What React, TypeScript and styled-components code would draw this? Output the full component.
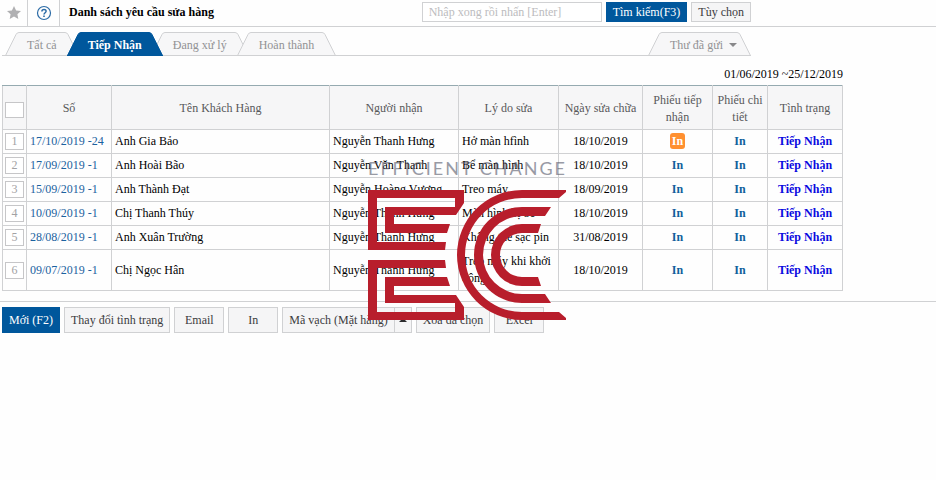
import React from "react";
import styled, { createGlobalStyle, css } from "styled-components";

const line = "#d0d1d3";
const blue = "#00579c";

const GlobalStyle = createGlobalStyle`
  * { box-sizing: border-box; }
  body { margin: 0; background: #fefefe; color: #000; }
  body, button, input, table { font: 12px/17px "Liberation Serif", serif; }
  button { cursor: pointer; }
  a { text-decoration: none; }
`;

const TopBar = styled.header`
  border-bottom: 1px solid ${line};
`;
const TopBarInner = styled.div`
  display: flex;
  align-items: stretch;
  height: 26px;
  max-width: 751px;
`;
const IconButton = styled.button<{ $width: number }>`
  flex: none;
  width: ${(p) => p.$width}px;
  display: flex;
  align-items: center;
  justify-content: center;
  padding: 0;
  border: 0;
  border-right: 1px solid ${line};
  background: none;
`;
const Title = styled.h1`
  flex: 1;
  margin: 0;
  padding: 4px 0 0 9px;
  font-size: 12px;
  line-height: 17px;
  white-space: nowrap;
`;
const SearchForm = styled.form`
  display: flex;
  align-items: center;
  gap: 4px;
  padding-bottom: 2px;
`;
const SearchInput = styled.input`
  width: 180px;
  height: 20px;
  padding: 0 6px;
  border: 1px solid ${line};
  background: #fff;
  &::placeholder { color: #bcbcbe; opacity: 1; }
`;
const Button = styled.button<{ $primary?: boolean; $small?: boolean }>`
  height: ${(p) => (p.$small ? 20 : 26)}px;
  min-width: 50px;
  padding: 0 6px;
  border: 1px solid ${line};
  background: #f5f5f6;
  color: #3c3c3e;
  white-space: nowrap;
  ${(p) =>
    p.$primary &&
    css`
      border-color: ${blue};
      background: ${blue};
      color: #fff;
    `}
`;

const TabArea = styled.nav`
  max-width: 749px;
  margin: 5px 0 0 2px;
  border-bottom: 1px solid ${line};
`;
const TabList = styled.div`
  display: flex;
  padding-left: 3px;
`;
const Tab = styled.button<{ $active?: boolean; $end?: boolean }>`
  display: flex;
  height: 24px;
  margin: 0 -12px -1px 0;
  padding: 0;
  border: 0;
  background: none;
  color: ${(p) => (p.$active ? "#fff" : "#929294")};
  font-weight: ${(p) => (p.$active ? "bold" : "normal")};
  white-space: nowrap;
  ${(p) => p.$active && "z-index: 1;"}
  ${(p) => p.$end && "margin-left: auto; margin-right: 0;"}
`;
const TabLabel = styled.span<{ $active?: boolean; $menu?: boolean }>`
  display: flex;
  align-items: center;
  gap: 6px;
  height: 24px;
  padding: 2px ${(p) => (p.$menu ? 0 : p.$active ? 7 : 8)}px 0
    ${(p) => (p.$active ? 7 : 8)}px;
  border-top: 1px solid ${(p) => (p.$active ? blue : line)};
  border-bottom: 1px solid ${(p) => (p.$active ? blue : line)};
  background: ${(p) => (p.$active ? blue : "#f7f7f8")};
`;
const TabEdge = ({ active, flip }: { active?: boolean; flip?: boolean }) => (
  <svg width="14" height="24" viewBox="0 0 14 24" aria-hidden="true">
    <g transform={flip ? "translate(14 0) scale(-1 1)" : undefined}>
      <path d="M0 24L11 2.5Q12 .5 14 .5V24Z" fill={active ? blue : "#f7f7f8"} />
      <path d="M0 23.5H14" stroke={active ? blue : line} />
      <path d="M.3 24L11 2.5Q12 .5 14 .5" fill="none" stroke={active ? blue : line} />
    </g>
  </svg>
);

const Content = styled.main`
  max-width: 843px;
  padding: 10px 0 10px 2px;
`;
const Period = styled.div`
  margin-bottom: 2px;
  text-align: right;
`;
const Table = styled.table`
  width: 100%;
  table-layout: fixed;
  border-collapse: collapse;
`;
const Col = styled.col<{ $width?: number }>`
  ${(p) => p.$width && `width: ${p.$width}px;`}
`;
const HeadCell = styled.th`
  height: 44px;
  padding: 3px 3px 1px;
  border: 1px solid ${line};
  border-top-color: #95aab0;
  background: #f6f6f7;
  color: #58585a;
  font-weight: normal;
`;
const Cell = styled.td<{ $center?: boolean }>`
  padding: 3px;
  border: 1px solid ${line};
  text-align: ${(p) => (p.$center ? "center" : "left")};
`;
const CheckAll = styled.input`
  appearance: none;
  display: block;
  width: 19px;
  height: 16px;
  margin: 2px 0 0 -1px;
  border: 1px solid #c6c6c8;
  background: #fff;
`;
const SelectCell = styled(Cell)`
  padding: 0 2px;
`;
const RowNumber = styled.button`
  display: block;
  width: 19px;
  height: 17px;
  padding: 0;
  border: 1px solid #c6c6c8;
  background: #fff;
  color: #a2a2a4;
  line-height: 15px;
`;
const NumberLink = styled.a`
  color: #1b629f;
`;
const PrintLink = styled.a<{ $highlight?: boolean }>`
  color: #10609c;
  font-weight: bold;
  ${(p) =>
    p.$highlight &&
    css`
      display: inline-block;
      height: 16px;
      padding: 0 2px;
      border-radius: 3px;
      background: #ff9030;
      color: #fff;
      line-height: 16px;
      vertical-align: top;
    `}
`;
const StatusLink = styled.a`
  color: #0a0ae0;
  font-weight: bold;
`;

const Footer = styled.footer`
  display: flex;
  flex-wrap: wrap;
  gap: 4px;
  padding: 5px 2px;
  border-top: 1px solid ${line};
`;
const SplitButton = styled.div`
  display: flex;
`;
const ArrowButton = styled(Button)`
  min-width: 0;
  width: 18px;
  margin-left: -1px;
  padding: 0;
`;
const ArrowIcon = styled.svg`
  display: block;
  margin: 0 auto;
`;

const Page = styled.div`
  position: relative;
`;
const Watermark = styled.div`
  position: absolute;
  top: 157px;
  left: 368px;
  width: 202px;
  pointer-events: none;
`;
const WatermarkText = styled.div`
  height: 33px;
  color: #55586a;
  font: 18px/22px Lato, sans-serif;
  letter-spacing: 2px;
  white-space: nowrap;
  opacity: 0.6;
`;
const WatermarkLogo = styled.svg`
  display: block;
`;

const upperE =
  "M0 0H96V13L88 25H26V34H82L79 43H17V17H87V8H9V52H78L77 60H0Z";

const columns: { name: string; width?: number }[] = [
  { name: "Số", width: 85 },
  { name: "Tên Khách Hàng" },
  { name: "Người nhận", width: 129 },
  { name: "Lý do sửa", width: 100 },
  { name: "Ngày sửa chữa", width: 84 },
  { name: "Phiếu tiếp nhận", width: 70 },
  { name: "Phiếu chi tiết", width: 55 },
  { name: "Tình trạng", width: 75 },
];

const rows = [
  ["17/10/2019 -24", "Anh Gia Bảo", "Nguyễn Thanh Hưng", "Hở màn hfình", "18/10/2019"],
  ["17/09/2019 -1", "Anh Hoài Bão", "Nguyễn Văn Thanh", "Bể màn hình", "18/10/2019"],
  ["15/09/2019 -1", "Anh Thành Đạt", "Nguyễn Hoàng Vương", "Treo máy", "18/09/2019"],
  ["10/09/2019 -1", "Chị Thanh Thúy", "Nguyễn Thanh Hưng", "Màn hình bị bể", "18/10/2019"],
  ["28/08/2019 -1", "Anh Xuân Trường", "Nguyễn Thanh Hưng", "Không thể sạc pin", "31/08/2019"],
  ["09/07/2019 -1", "Chị Ngọc Hân", "Nguyễn Thanh Hưng", "Treo máy khi khởi động", "18/10/2019"],
];

const tabs = ["Tất cả", "Tiếp Nhận", "Đang xử lý", "Hoàn thành"];

export default function App() {
  return (
    <Page>
      <GlobalStyle />
      <TopBar>
        <TopBarInner>
          <IconButton $width={28} aria-label="Yêu thích">
            <svg width="14" height="14" viewBox="0 0 14 14">
              <path d="M7 0L9.1 4.4L14 5L10.4 8.2L11.3 13L7 10.6L2.7 13L3.6 8.2L0 5L4.9 4.4Z" fill="#b0b0b2" />
            </svg>
          </IconButton>
          <IconButton $width={32} aria-label="Trợ giúp">
            <svg width="16" height="16" viewBox="0 0 16 16" fill="none" stroke="#2b6ba6">
              <circle cx="8" cy="8" r="6.5" strokeWidth="1.2" />
              <path d="M5.9 6.4C5.9 3.7 10.2 3.8 10.1 6.3C10 7.8 8 7.8 8 9.6" strokeWidth="1.5" />
              <path d="M8 10.6V12.1" strokeWidth="1.6" />
            </svg>
          </IconButton>
          <Title>Danh sách yêu cầu sửa hàng</Title>
          <SearchForm onSubmit={(e) => e.preventDefault()}>
            <SearchInput aria-label="Tìm kiếm" placeholder="Nhập xong rồi nhấn [Enter]" />
            <Button $primary $small type="submit">Tìm kiếm(F3)</Button>
            <Button $small type="button">Tùy chọn</Button>
          </SearchForm>
        </TopBarInner>
      </TopBar>

      <TabArea>
        <TabList>
          {tabs.map((name, i) => (
            <Tab key={name} $active={i === 1}>
              <TabEdge active={i === 1} />
              <TabLabel $active={i === 1}>{name}</TabLabel>
              <TabEdge active={i === 1} flip />
            </Tab>
          ))}
          <Tab $end>
            <TabEdge />
            <TabLabel $menu>
              Thư đã gửi
              <svg width="8" height="4" viewBox="0 0 8 4" aria-hidden="true">
                <path d="M0 0H8L4 4Z" fill="#88888a" />
              </svg>
            </TabLabel>
            <TabEdge flip />
          </Tab>
        </TabList>
      </TabArea>

      <Content>
        <Period>01/06/2019 ~25/12/2019</Period>
        <Table>
          <colgroup>
            <Col $width={24} />
            {columns.map((c) => (
              <Col key={c.name} $width={c.width} />
            ))}
          </colgroup>
          <thead>
            <tr>
              <HeadCell>
                <CheckAll type="checkbox" aria-label="Chọn tất cả" />
              </HeadCell>
              {columns.map((c) => (
                <HeadCell key={c.name}>{c.name}</HeadCell>
              ))}
            </tr>
          </thead>
          <tbody>
            {rows.map(([no, customer, receiver, reason, date], i) => (
              <tr key={no}>
                <SelectCell>
                  <RowNumber>{i + 1}</RowNumber>
                </SelectCell>
                <Cell><NumberLink href="#">{no}</NumberLink></Cell>
                <Cell>{customer}</Cell>
                <Cell>{receiver}</Cell>
                <Cell>{reason}</Cell>
                <Cell $center>{date}</Cell>
                <Cell $center><PrintLink href="#" $highlight={i === 0}>In</PrintLink></Cell>
                <Cell $center><PrintLink href="#">In</PrintLink></Cell>
                <Cell $center><StatusLink href="#">Tiếp Nhận</StatusLink></Cell>
              </tr>
            ))}
          </tbody>
        </Table>
      </Content>

      <Footer>
        <Button $primary>Mới (F2)</Button>
        <Button>Thay đổi tình trạng</Button>
        <Button>Email</Button>
        <Button>In</Button>
        <SplitButton>
          <Button>Mã vạch (Mặt hàng)</Button>
          <ArrowButton aria-label="Thêm">
            <ArrowIcon width="8" height="4" viewBox="0 0 8 4">
              <path d="M0 4H8L4 0Z" fill="#2c2c2e" />
            </ArrowIcon>
          </ArrowButton>
        </SplitButton>
        <Button>Xóa đã chọn</Button>
        <Button>Excel</Button>
      </Footer>

      <Watermark>
        <WatermarkText>EFFICIENT CHANGE</WatermarkText>
        <WatermarkLogo width="198" height="130" viewBox="0 0 198 130" fill="#b81e2c" role="img" aria-label="EC">
          <path d={upperE} />
          <path d={upperE} transform="translate(0 130) scale(1 -1)" />
          <path d="M154 0H198V2L191 8H154A57 57 0 0 0 154 122H191L198 128V130H154A65 65 0 0 1 154 0Z" />
          <path d="M154 17H183L177 26H154A39 39 0 0 0 154 104H177L183 113H154A48 48 0 0 1 154 17Z" />
          <path d="M154 34H173L170 43H154A22 22 0 0 0 154 87H170L173 96H154A31 31 0 0 1 154 34Z" />
        </WatermarkLogo>
      </Watermark>
    </Page>
  );
}
